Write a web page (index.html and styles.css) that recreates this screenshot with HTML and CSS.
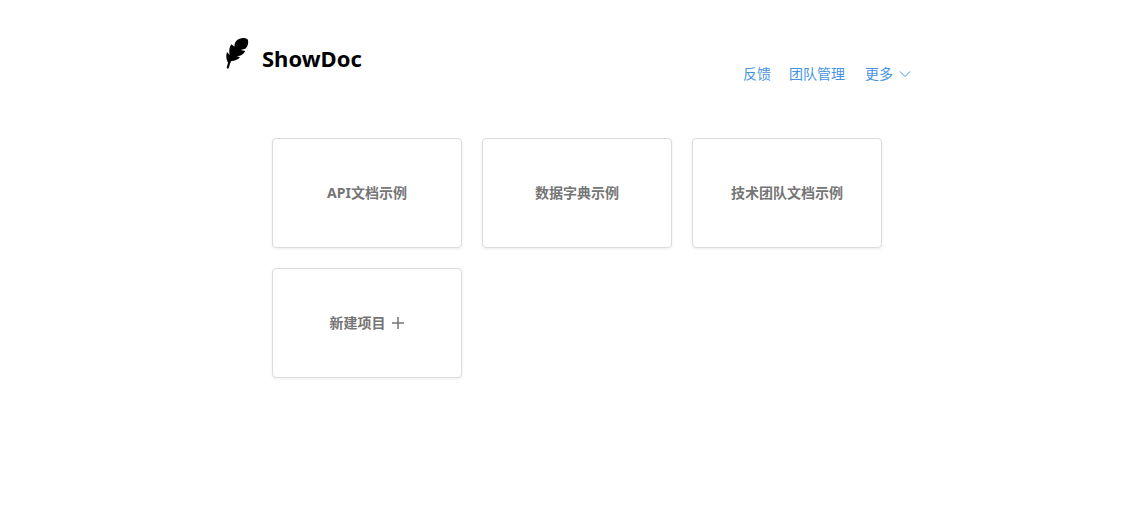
FILE: index.html
```html
<!DOCTYPE html>
<html lang="zh-CN">
<head>
<meta charset="utf-8">
<meta name="viewport" content="width=device-width, initial-scale=1">
<title>ShowDoc</title>
<link rel="stylesheet" href="styles.css">
</head>
<body>
<div class="page">
  <header class="header">
    <div class="brand">
      <svg class="brand-logo" viewBox="0 0 90 114" aria-hidden="true">
        <path d="M17 104 L14 101 L18 86 C13 77 11 66 15 54 L23 63 C20 50 22 40 28 31 L38 38 C36 27 42 18 53 14 C62 11 74 12 78 18 C80 30 77 38 70 44 L56 48 L70 51 C65 60 58 65 50 66 L44 66 L54 70 C47 78 38 81 28 81 C24 86 23 95 20 103 Z"/>
      </svg>
      <h1 class="brand-name">ShowDoc</h1>
    </div>
    <nav class="nav">
      <a class="nav-link" href="#">反馈</a>
      <a class="nav-link" href="#">团队管理</a>
      <button class="nav-link nav-more" type="button">更多
        <svg class="chevron" viewBox="0 0 12 12" aria-hidden="true"><path d="M1 3.5 L6 8.5 L11 3.5"/></svg>
      </button>
    </nav>
  </header>
  <main class="projects">
    <a class="card" href="#">API文档示例</a>
    <a class="card" href="#">数据字典示例</a>
    <a class="card" href="#">技术团队文档示例</a>
    <button class="card" type="button">新建项目
      <svg class="plus" viewBox="0 0 14 14" aria-hidden="true"><path d="M7 1V13M1 7H13"/></svg>
    </button>
  </main>
</div>
</body>
</html>
```
FILE: styles.css
```css
body {
  margin: 0;
  background: #fff;
  font-family: "Noto Sans", "Noto Sans CJK SC", sans-serif;
  font-size: 14px;
  line-height: 20px;
}

.page {
  max-width: 701px;
  margin: 0 auto;
  padding-top: 34px;
}

.header {
  display: flex;
  justify-content: space-between;
  align-items: flex-end;
  padding-right: 12px;
}

.brand {
  display: flex;
  gap: 10px;
  padding-bottom: 11px;
}

.brand-logo {
  width: 30px;
  height: 38px;
}

.brand-name {
  margin: 9px 0 0;
  font-size: 22px;
  line-height: 30px;
  font-weight: 700;
}

.nav {
  display: flex;
  gap: 18px;
}

.nav-link {
  border: 0;
  padding: 0;
  background: none;
  color: #4694df;
  font: inherit;
  text-decoration: none;
  cursor: pointer;
}

.nav-more {
  display: flex;
  align-items: center;
  gap: 6px;
  margin-left: 2px;
}

.chevron {
  width: 12px;
  height: 12px;
  fill: none;
  stroke: currentColor;
}

.projects {
  display: grid;
  grid-template-columns: repeat(auto-fill, 190px);
  gap: 20px;
  padding: 54px 40px 20px 50px;
}

.card {
  display: flex;
  align-items: center;
  justify-content: center;
  gap: 5px;
  box-sizing: border-box;
  min-height: 110px;
  border: 1px solid #dcdcdc;
  border-radius: 4px;
  padding: 8px;
  background: #fff;
  box-shadow: 0 1px 3px rgba(0, 0, 0, 0.08);
  color: #757575;
  font: inherit;
  font-weight: 700;
  text-decoration: none;
  cursor: pointer;
}

.plus {
  width: 14px;
  height: 14px;
  fill: none;
  stroke: currentColor;
  stroke-width: 1.5;
}
```
